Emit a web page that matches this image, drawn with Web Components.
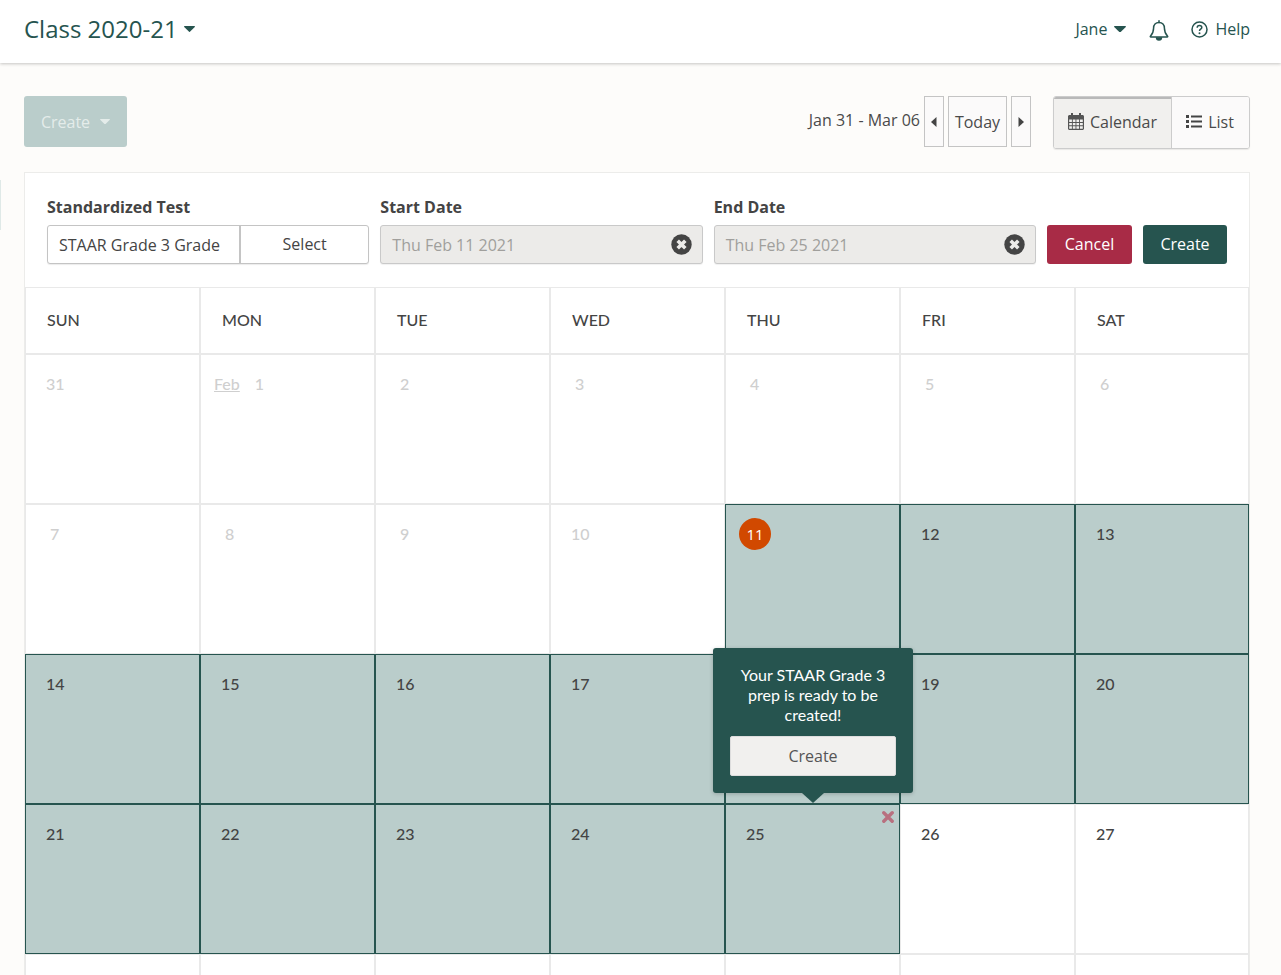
<!DOCTYPE html>
<html lang="en"><head><meta charset="utf-8"><title>Calendar</title>
<style>
html,body{margin:0;height:975px;overflow:hidden;background:#fdfcfa;font-family:"Open Sans",sans-serif}
</style></head><body>
<app-header></app-header>
<page-toolbar></page-toolbar>
<side-tab></side-tab>
<main-card>
  <test-form></test-form>
  <cal-grid></cal-grid>
</main-card>
<script>
const caret=(w,c)=>`<svg width="${w}" height="${w*.55}" viewBox="0 0 11 6" style="display:block"><path d="M.6 0h9.800c.5 0 .7.5.4.9L5.900 5.700a.6.6 0 0 1-.8 0L.2.9C-.1.5.1 0 .6 0z" fill="${c}"/></svg>`;
function def(name,css,html){
  customElements.define(name,class extends HTMLElement{
    constructor(){super();const r=this.attachShadow({mode:'open'});
      r.innerHTML=`<style>${css}</style>${html}`;}
  });
}
def('app-header',`
:host{display:flex;align-items:center;justify-content:space-between;box-sizing:border-box;height:63px;margin-bottom:1px;padding:0 31px 5px 24px;background:#fff;box-shadow:0 1px 3px rgba(0,0,0,.22);color:#26544f;position:relative}
.t{display:flex;align-items:center;gap:6px;font-size:24px;line-height:32px}
.r{display:flex;align-items:center;font-size:16px;line-height:22px}
.j{display:flex;align-items:center;gap:7px;margin-right:23px}
.b{margin:3px 22px 0 0;display:block}
.h{display:flex;align-items:center;gap:7px}
svg{display:block}
`,`<div class="t">Class 2020-21 ${caret(11,'#26544f')}</div>
<div class="r"><div class="j">Jane ${caret(12,'#26544f')}</div>
<svg class="b" width="20" height="22" viewBox="0 0 20 22" fill="none" stroke="#26544f" stroke-width="1.500"><path d="M10 2.400c-3.400 0-5.400 2.500-5.400 5.600 0 4.200-1.200 6.100-3.200 8.200-.3.4-.1.9.4.9h16.400c.5 0 .7-.5.4-.9-2-2.100-3.200-4-3.200-8.200 0-3.100-2-5.600-5.400-5.600z"/><path d="M10 .8v1.600" stroke-linecap="round"/><path d="M7.500 17.300c0 1.700 1.100 2.800 2.500 2.800s2.500-1.100 2.500-2.800" fill="#26544f"/></svg>
<div class="h"><svg width="17" height="17" viewBox="0 0 17 17" fill="none" stroke="#26544f"><circle cx="8.500" cy="8.500" r="7.500" stroke-width="1.500"/><path d="M6.200 6.700c0-1.400 1-2.200 2.300-2.200s2.300.8 2.300 2c0 1.700-2.300 1.700-2.300 3.400" stroke-width="1.500"/><circle cx="8.500" cy="12.300" r="1" fill="#26544f" stroke="none"/></svg>Help</div></div>`);
def('page-toolbar',`
:host{display:flex;align-items:flex-start;padding:32px 31px 0 24px;height:76px;color:#4a4a4a;font-size:16px}
.c{display:flex;align-items:center;justify-content:center;gap:10px;width:103px;height:51px;border-radius:3px;background:#bacdcb;color:#e4ecea;margin-right:auto}
.d{margin:12px 4px 0 0;line-height:24px}
.n{box-sizing:border-box;height:51px;border:1px solid #c4c4c4;background:#fbfafa;display:flex;align-items:center;justify-content:center}
.a{width:20px}.y{width:59px;margin:0 4px;font-size:16px}
.s{display:flex;box-sizing:border-box;width:197px;height:53px;margin-left:22px;border:1px solid #ccc;border-radius:3px;overflow:hidden;box-shadow:0 1px 1px rgba(0,0,0,.08)}
.s div{display:flex;align-items:center;justify-content:center;gap:6px;padding-bottom:2px;box-sizing:border-box}
.k{width:118px;background:#f1f0ee;box-shadow:inset 0 2px 0 #b9b9b9;border-right:1px solid #ccc}
.l{flex:1;background:#fbfafa;padding-right:1px}
`,`<div class="c">Create ${caret(10,'#e4ecea')}</div>
<div class="d">Jan 31 - Mar 06</div>
<div class="n a"><svg width="6" height="10" viewBox="0 0 6 10"><path d="M5.500 0v10L0 5z" fill="#444"/></svg></div>
<div class="n y">Today</div>
<div class="n a"><svg width="6" height="10" viewBox="0 0 6 10"><path d="M.5 0v10L6 5z" fill="#444"/></svg></div>
<div class="s"><div class="k"><svg width="16" height="17" viewBox="0 0 16 17"><path fill="#555" fill-rule="evenodd" d="M3 0h2v2h6V0h2v2h1.500C15.300 2 16 2.700 16 3.500v12c0 .8-.7 1.500-1.500 1.500h-13C.7 17 0 16.300 0 15.500v-12C0 2.700.7 2 1.500 2H3zM1.200 6.500V9h2.700V6.500zm3.600 0V9h2.700V6.500zm3.600 0V9h2.700V6.500zm3.600 0V9h2.800V6.500zM1.200 10v2.300h2.700V10zm3.600 0v2.300h2.700V10zm3.600 0v2.300h2.700V10zm3.600 0v2.300h2.800V10zM1.200 13.200v2.600h2.700v-2.600zm3.600 0v2.600h2.700v-2.600zm3.600 0v2.600h2.700v-2.600zm3.600 0v2.600h2.800v-2.600z"/></svg>Calendar</div>
<div class="l"><svg width="16" height="13" viewBox="0 0 16 13"><path fill="#444" d="M0 0h3v3H0zM5 .5h11v2H5zM0 5h3v3H0zM5 5.500h11v2H5zM0 10h3v3H0zM5 10.500h11v2H5z"/></svg>List</div></div>`);
def('side-tab',`:host{display:block;position:absolute;left:0;top:180px;width:1px;height:50px;background:#dfe9e7}`,``);
def('main-card',`:host{display:block;box-sizing:border-box;margin:0 31px 0 24px;width:1226px;height:803px;background:#fff;border:1px solid #ececea;border-bottom:0;position:relative}`,`<slot></slot>`);
const clear=`<svg width="21" height="21" viewBox="0 0 21 21"><circle cx="10.500" cy="10.500" r="10.200" fill="#444"/><path d="M6.700 6.700l7.600 7.600M14.300 6.700l-7.600 7.600" stroke="#ecebe9" stroke-width="3.600"/></svg>`;
def('test-form',`
:host{display:flex;align-items:flex-end;gap:11px;box-sizing:border-box;height:114px;padding:0 22px 23px 22px;color:#444;font-size:16px}
.f{flex:1 1 0;min-width:0}
label{display:block;font-weight:700;font-size:16px;line-height:22px;margin-bottom:7px}
.box{box-sizing:border-box;height:39px;display:flex;align-items:center}
.g{border:1px solid #c4c4c4;border-radius:3px;background:#fff;box-shadow:0 1px 1px rgba(0,0,0,.08)}
.g span{width:193px;box-sizing:border-box;padding-left:11px;height:100%;display:flex;align-items:center;border-right:2px solid #c4c4c4;white-space:nowrap}
.g b{flex:1;text-align:center;font-weight:400;margin-top:-2px}
.d{background:#ecebe9;border:1px solid #c9c9c9;border-radius:3px;padding:0 10px 0 11px;justify-content:space-between;color:#a09f9c;box-shadow:0 1px 1px rgba(0,0,0,.06)}
.b{flex:none;height:39px;border-radius:3px;color:#fff;display:flex;align-items:center;justify-content:center;padding-bottom:2px;box-sizing:border-box}
.x{width:85px;background:#a82b46}.o{width:84px;background:#26544f}
svg{display:block}
`,`<div class="f"><label>Standardized Test</label><div class="box g"><span>STAAR Grade 3 Grade</span><b>Select</b></div></div>
<div class="f"><label>Start Date</label><div class="box d">Thu Feb 11 2021 ${clear}</div></div>
<div class="f"><label>End Date</label><div class="box d">Thu Feb 25 2021 ${clear}</div></div>
<div class="b x">Cancel</div><div class="b o">Create</div>`);
def('cal-cell',`
:host{display:block;box-sizing:border-box;border:1px solid #e9e9e9;padding:17px 0 0 20px;font:500 16px/24px Lato,sans-serif;color:#444;min-width:0;overflow:hidden}
:host([sel]){background:#bacdcb;border-color:#26544f}
:host([off]){color:#cfcfcf}
:host([one]){padding-left:24px}
:host([feb]){padding-left:13px}
:host([last]){border-bottom:0;padding-top:0}
:host([today]) .v{display:flex;align-items:center;justify-content:center;width:32px;height:32px;border-radius:50%;background:#d14900;color:#fff;margin:-4px 0 0 -7px;font-family:"Open Sans",sans-serif;font-weight:400;font-size:15px}
`,`<span class="v"><slot name="m"></slot><slot></slot></span>`);
def('month-tag',`:host{display:inline-block;margin-right:15px;text-decoration:underline;text-decoration-thickness:1px}`,`<slot></slot>`);
def('cal-head',`:host{display:block;box-sizing:border-box;border:1px solid #e9e9e9;padding:20px 0 0 21px;font:500 16px/24px Lato,sans-serif;color:#444}`,`<slot></slot>`);
def('pop-tip',`
:host{display:block;position:absolute;left:688px;top:475px;width:200px;height:145px;box-sizing:border-box;background:#26544f;border-radius:3px;padding:17px 17px 0;color:#fff;text-align:center;font:400 16px/20px Lato,sans-serif;box-shadow:0 1px 4px rgba(0,0,0,.2);z-index:2}
:host::after{content:"";position:absolute;left:89px;bottom:-10px;border:11px solid transparent;border-bottom:0;border-top:10px solid #26544f}
.b{margin-top:11px;height:40px;box-sizing:border-box;background:#f1f0ee;border:1px solid #ddd;border-radius:2px;color:#555;display:flex;align-items:center;justify-content:center;font:400 16px "Open Sans",sans-serif}
`,`<div>Your STAAR Grade 3 prep is ready to be created!</div><div class="b">Create</div>`);
const heads=['SUN','MON','TUE','WED','THU','FRI','SAT'].map(d=>`<cal-head>${d}</cal-head>`).join('');
const days=[31,1,2,3,4,5,6,7,8,9,10,11,12,13,14,15,16,17,18,19,20,21,22,23,24,25,26,27];
let cells='';
days.forEach((d,i)=>{
  const sel=i>=11&&i<=25, off=i<11, one=String(d).length===1&&i<11&&i!==1;
  const attrs=[sel?'sel':'',off?'off':'',one?'one':'',i===11?'today':'',i===1?'feb':''].join(' ');
  let label=d;
  if(i===1)label='<month-tag slot="m">Feb</month-tag>1';
  if(i===18)label='';
  cells+=`<cal-cell ${attrs}>${label}</cal-cell>`;
});
for(let i=0;i<7;i++)cells+='<cal-cell last></cal-cell>';
def('cal-grid',`
:host{display:grid;grid-template-columns:repeat(6,175px) 174px;grid-template-rows:67px repeat(4,150px) 21px}
.x{position:absolute;left:857px;top:638px;z-index:1;display:block}
`,heads+cells+`<pop-tip></pop-tip><svg class="x" width="12" height="12" viewBox="0 0 12 12"><path d="M1.800 1.800l8.400 8.400M10.200 1.800l-8.400 8.400" stroke="#b8707f" stroke-width="3.400" stroke-linecap="round"/></svg>`);
</script>
</body></html>
